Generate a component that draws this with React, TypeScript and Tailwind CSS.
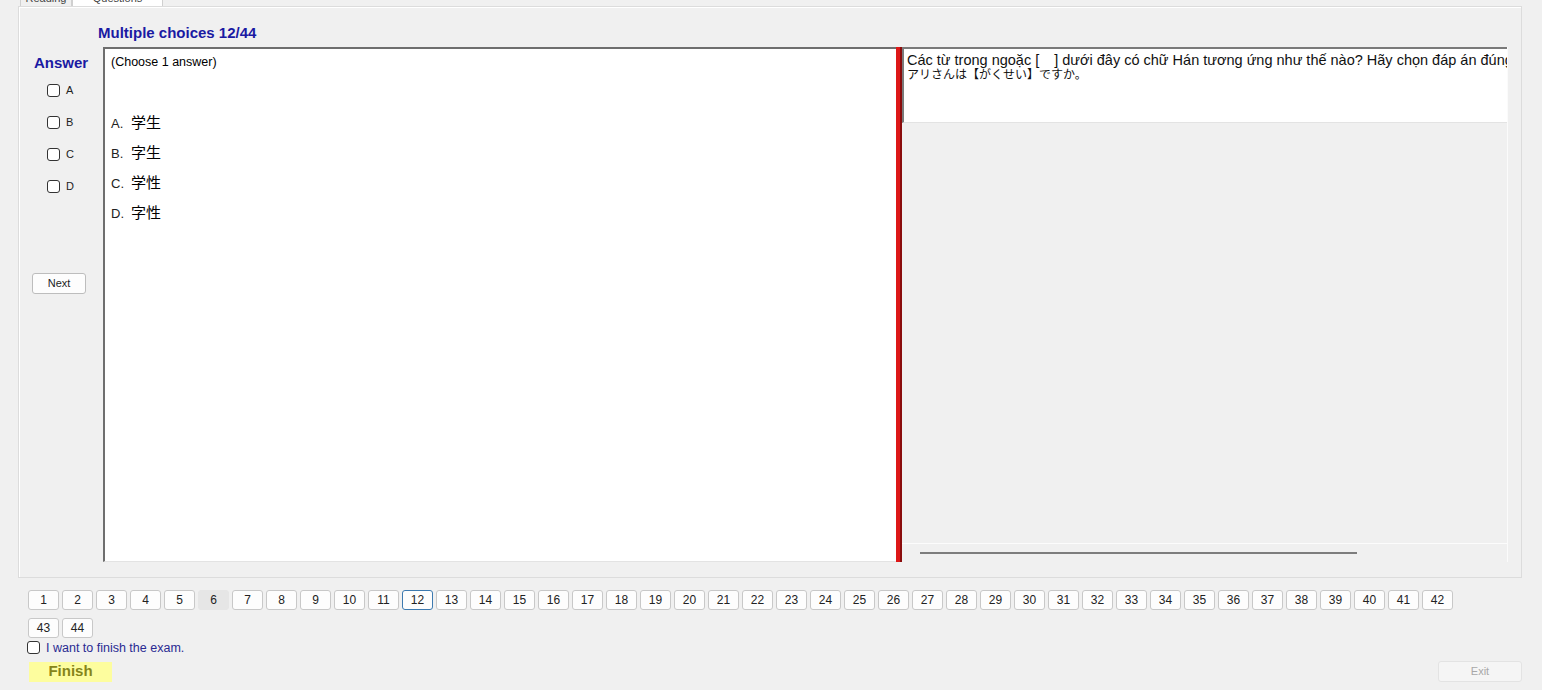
const nums = Array.from({ length: 44 }, (_, i) => i + 1)

const Box = () => (
  <span className="inline-block h-[13px] w-[13px] rounded-[3px] border border-[#333333] bg-white" />
)

const NumButton = ({ n }: { n: number }) => {
  let cls = "border-[#c8c8c8] bg-[#fdfdfd]"
  if (n === 6) cls = "border-[#e6e6e6] bg-[#e6e6e6]"
  if (n === 12) cls = "border-[#3d7ab0] bg-[#fdfdfd]"
  return (
    <div
      className={`flex h-[20px] w-[31px] items-center justify-center rounded-[3px] border text-[12px] text-[#222] ${cls}`}
    >
      {n}
    </div>
  )
}

export default function App() {
  const options = [
    ["A.", "学生"],
    ["B.", "字生"],
    ["C.", "学性"],
    ["D.", "字性"],
  ]

  return (
    <div className="h-[690px] w-[1542px] overflow-hidden bg-[#f0f0f0] font-['Liberation_Sans',Arial,sans-serif] text-black">
      {/* tab strip, mostly scrolled off the top */}
      <div className="flex h-[6px] items-end overflow-hidden pl-[20px]">
        <div className="flex h-[20px] w-[52px] items-end justify-center border border-b-0 border-[#d0d0d0] bg-[#f0f0f0] pb-[2px] text-[11px] leading-[11px] text-[#444]">
          Reading
        </div>
        <div className="flex h-[20px] w-[91px] items-end justify-center border border-b-0 border-[#d0d0d0] bg-white pb-[2px] text-[11px] leading-[11px] text-[#444]">
          Questions
        </div>
      </div>

      {/* tab page */}
      <div className="ml-[18px] h-[572px] w-[1504px] border border-[#dcdcdc] bg-[#f0f0f0] shadow-[inset_1px_1px_0_#ffffff]">
        <div className="pl-[79px] pt-[17px] text-[15px] font-bold leading-[17px] text-[#1a1aa3]">
          Multiple choices 12/44
        </div>

        <div className="mt-[6px] flex h-[515px]">
          {/* answer column */}
          <div className="flex w-[84px] flex-col">
            <div className="pl-[15px] pt-[7px] text-[15px] font-bold leading-[17px] text-[#1a1aa3]">Answer</div>
            <div className="mt-[13px] flex flex-col gap-[19px] pl-[28px]">
              {["A", "B", "C", "D"].map((l) => (
                <div key={l} className="flex h-[13px] items-center gap-[6px]">
                  <Box />
                  <span className="text-[11px] leading-[13px] text-[#222]">{l}</span>
                </div>
              ))}
            </div>
            <div className="ml-[13px] mt-[80px] flex h-[21px] w-[54px] items-center justify-center rounded-[3px] border border-[#bdbdbd] bg-[#fdfdfd] text-[11px] text-[#222]">
              Next
            </div>
          </div>

          {/* question panel */}
          <div className="h-full w-[793px] border-l-2 border-t-2 border-b border-[#6e6e6e] border-b-[#e3e3e3] bg-white pl-[6px] pt-[6px]">
            <div className="text-[12.5px] leading-[14px]">(Choose 1 answer)</div>
            <div className="mt-[44px] flex flex-col gap-[12px]">
              {options.map(([k, v]) => (
                <div key={k} className="flex h-[18px] items-baseline gap-[6px]">
                  <span className="w-[14px] text-[13px] text-[#222]">{k}</span>
                  <span className="font-['Noto_Sans_CJK_JP',sans-serif] text-[15px] leading-[18px]">{v}</span>
                </div>
              ))}
            </div>
          </div>

          {/* splitter */}
          <div className="h-full w-[6px] border-r-2 border-[#8a0c0c] bg-[#dd1818]" />

          {/* reading panel */}
          <div className="flex h-full w-[606px] flex-col border-r border-[#fbfbfb] bg-[#f0f0f0]">
            <div className="h-[76px] overflow-hidden whitespace-nowrap border-l-2 border-t-2 border-b border-[#7a7a7a] border-b-[#e3e3e3] bg-white pl-[3px] pt-[5px]">
              <div className="text-[14.5px] leading-[13px] text-[#111]">
                Các từ trong ngoặc [　] dưới đây có chữ Hán tương ứng như thế nào? Hãy chọn đáp án đúng
              </div>
              <div className="font-['Noto_Sans_CJK_JP',sans-serif] text-[12px] leading-[14px] text-[#111]">
                アリさんは【がくせい】ですか。
              </div>
            </div>
            <div className="flex-1" />
            <div className="flex h-[19px] items-center border-t border-[#fcfcfc] pl-[18px]">
              <div className="h-[2px] w-[437px] bg-[#7d7d7d]" />
            </div>
          </div>
        </div>
      </div>

      {/* question buttons */}
      <div className="ml-[28px] flex w-[1426px] flex-wrap gap-x-[3px] gap-y-[8px] pt-[12px]">
        {nums.map((n) => (
          <NumButton key={n} n={n} />
        ))}
      </div>

      <div className="ml-[27px] mt-[3px] flex h-[13px] items-center gap-[6px]">
        <Box />
        <span className="text-[12.5px] leading-[14px] text-[#2a2a92]">I want to finish the exam.</span>
      </div>

      <div className="mt-[7px] flex w-[1522px] items-center justify-between pl-[29px]">
        <div className="flex h-[20px] w-[83px] items-center justify-center bg-[#fdfd9e] text-[15px] font-bold text-[#85851a]">
          Finish
        </div>
        <div className="flex h-[21px] w-[84px] items-center justify-center rounded-[3px] border border-[#e3e3e3] bg-[#f5f5f5] text-[11px] text-[#a8a8a8]">
          Exit
        </div>
      </div>
    </div>
  )
}
